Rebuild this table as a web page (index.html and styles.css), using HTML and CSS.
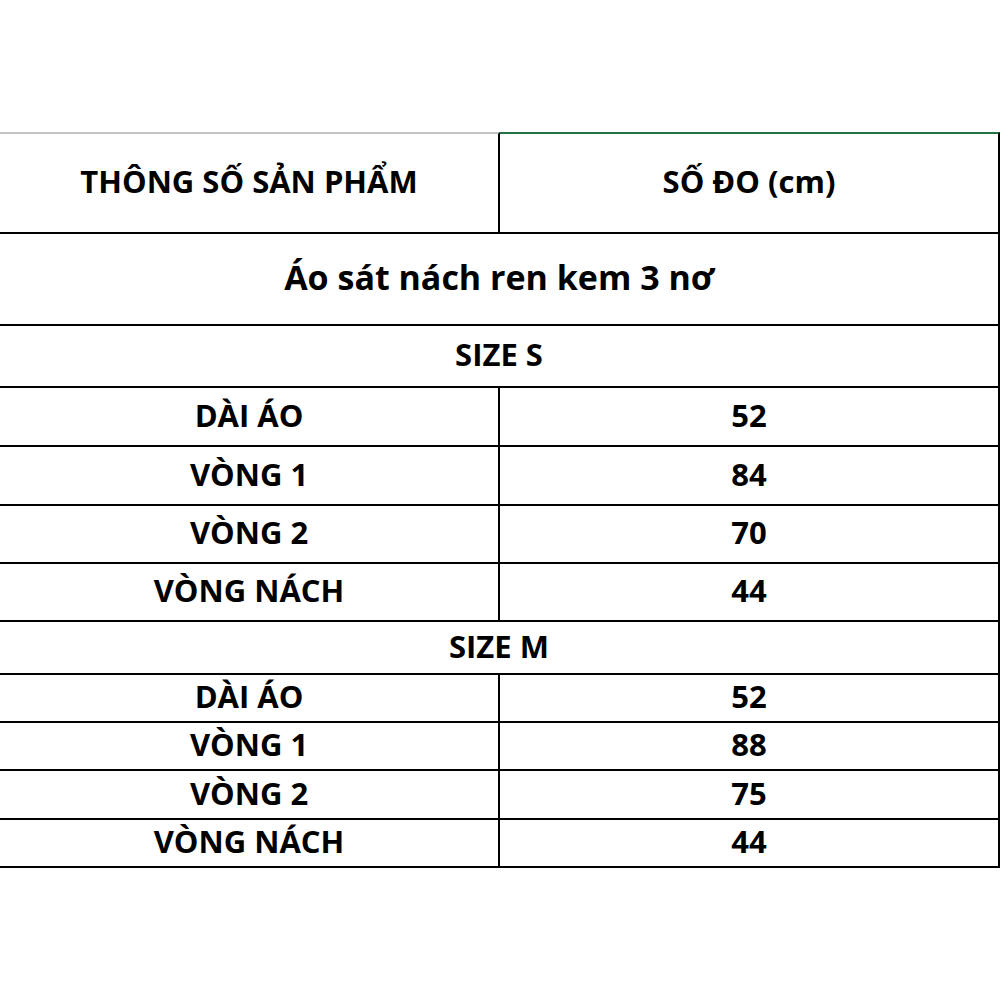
FILE: index.html
```html
<!DOCTYPE html>
<html lang="vi">
<head>
<meta charset="utf-8">
<title>Thông số sản phẩm</title>
<link rel="stylesheet" href="styles.css">
</head>
<body>
<div class="sheet">
  <div class="row head">
    <div class="cell left top-gray">THÔNG SỐ SẢN PHẨM</div>
    <div class="cell right top-green">SỐ ĐO (cm)</div>
  </div>
  <div class="row full title"><div class="cell right">Áo sát nách ren kem 3 nơ</div></div>
  <div class="row full size-s"><div class="cell right">SIZE S</div></div>
  <div class="row h59"><div class="cell left">DÀI ÁO</div><div class="cell right">52</div></div>
  <div class="row h59"><div class="cell left">VÒNG 1</div><div class="cell right">84</div></div>
  <div class="row h58"><div class="cell left">VÒNG 2</div><div class="cell right">70</div></div>
  <div class="row h58"><div class="cell left">VÒNG NÁCH</div><div class="cell right">44</div></div>
  <div class="row full size-m"><div class="cell right">SIZE M</div></div>
  <div class="row h48"><div class="cell left">DÀI ÁO</div><div class="cell right">52</div></div>
  <div class="row h48"><div class="cell left">VÒNG 1</div><div class="cell right">88</div></div>
  <div class="row h49"><div class="cell left">VÒNG 2</div><div class="cell right">75</div></div>
  <div class="row h48"><div class="cell left">VÒNG NÁCH</div><div class="cell right">44</div></div>
</div>
</body>
</html>
```
FILE: styles.css
```css
html, body {
  margin: 0;
  padding: 0;
  background: #fff;
}
body {
  font-family: "Open Sans", "Noto Sans", sans-serif;
  font-weight: 700;
  color: #000;
}
.sheet {
  margin-top: 132px;
  width: 1000px;
}
.row {
  display: grid;
  grid-template-columns: 500px 500px;
  box-sizing: border-box;
  border-bottom: 2px solid #000;
  font-size: 31px;
}
.row.full {
  grid-template-columns: 1000px;
}
.cell {
  display: flex;
  align-items: center;
  justify-content: center;
  box-sizing: border-box;
  padding-bottom: 4px;
  border-right: 2px solid #000;
  white-space: nowrap;
}
.head {
  height: 102px;
  font-size: 31px;
}
.top-gray {
  border-top: 2px solid #c4c4c4;
}
.top-green {
  border-top: 2px solid #217346;
}
.title {
  height: 92px;
  font-size: 34px;
}
.size-s { height: 62px; }
.size-m { height: 53px; }
.h59 { height: 59px; }
.h58 { height: 58px; }
.h49 { height: 49px; }
.h48 { height: 48px; }
```
